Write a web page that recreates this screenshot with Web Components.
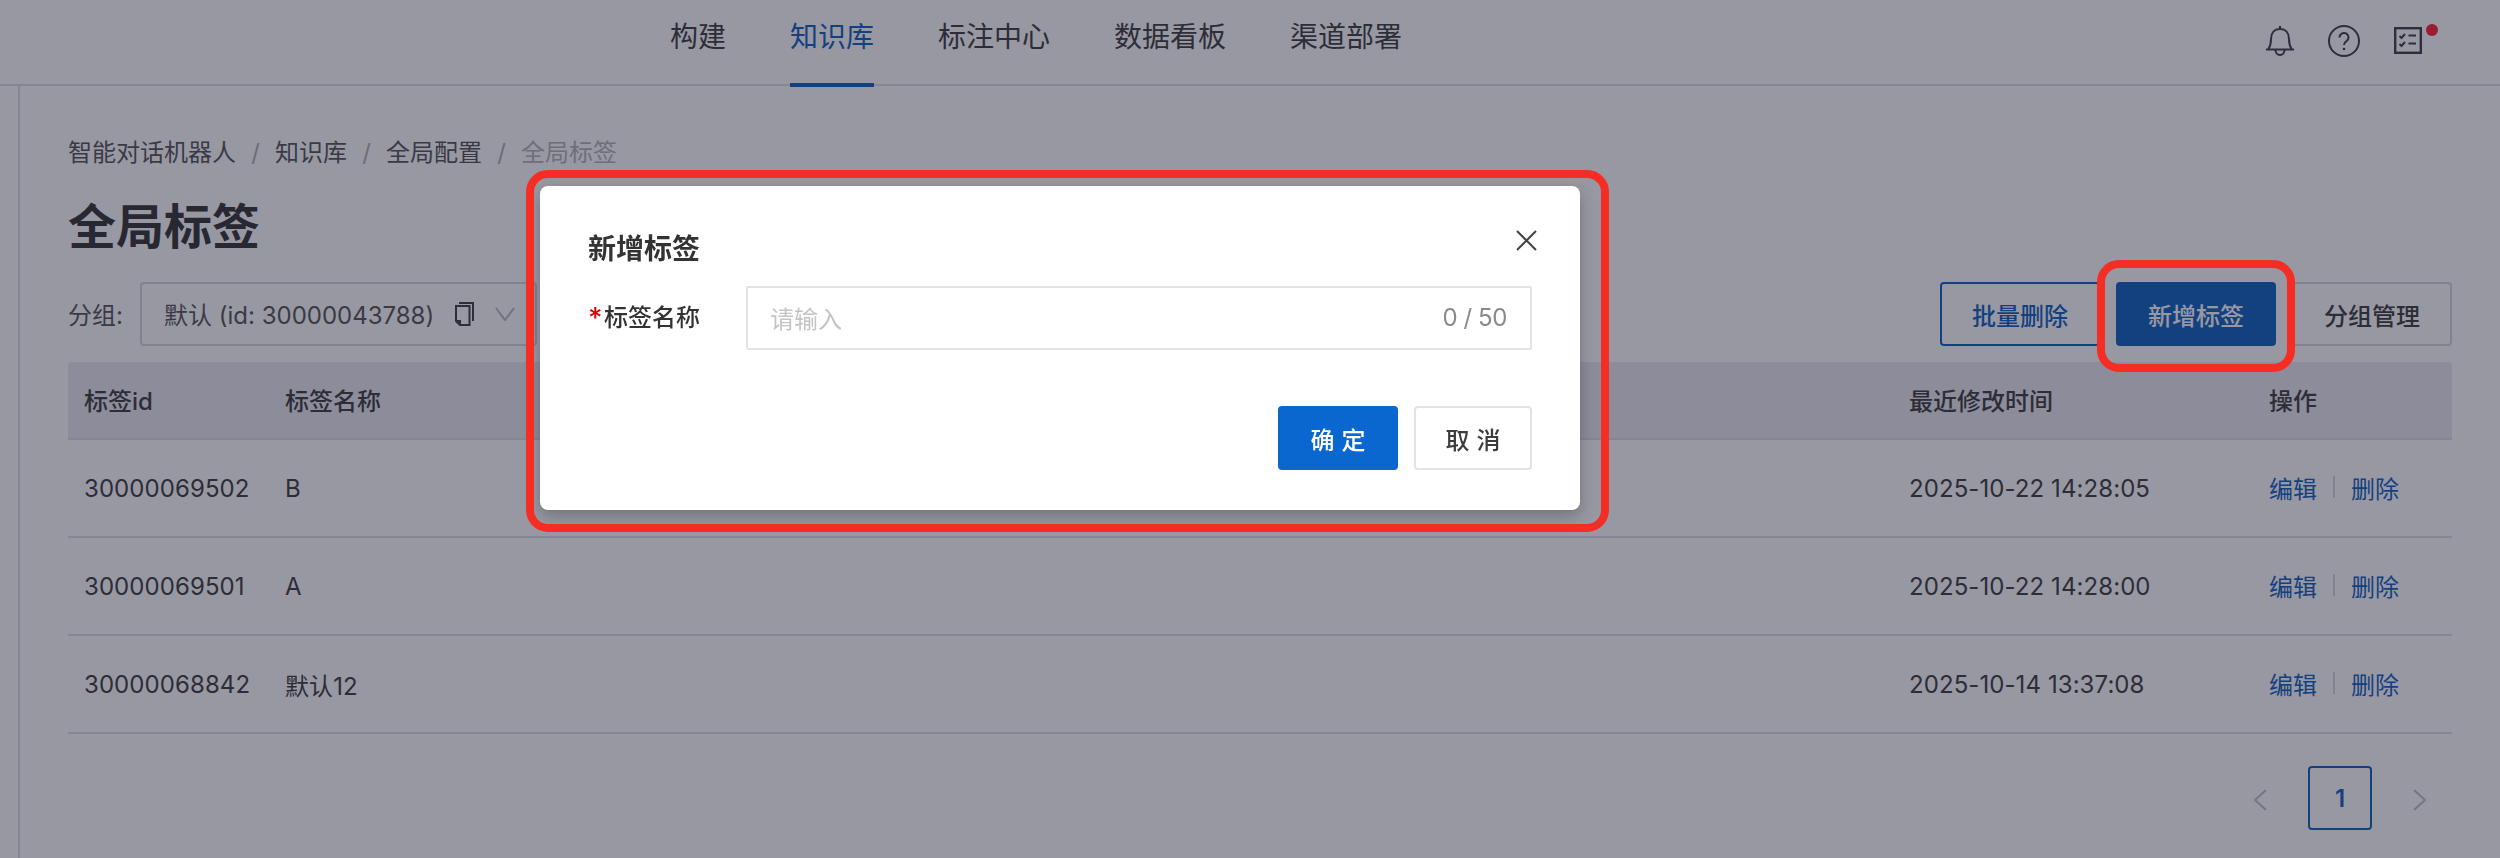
<!DOCTYPE html>
<html lang="zh">
<head>
<meta charset="utf-8">
<title>全局标签</title>
<style>
  html, body { margin: 0; height: 100%; overflow: hidden; background: #fff; }
  body { font-family: Inter, "Noto Sans CJK SC", sans-serif; font-size: 24px; color: #3c3c3c; }
</style>
</head>
<body>
<app-header>
  <nav-tab>构建</nav-tab>
  <nav-tab active>知识库</nav-tab>
  <nav-tab>标注中心</nav-tab>
  <nav-tab>数据看板</nav-tab>
  <nav-tab>渠道部署</nav-tab>
</app-header>

<page-body>
  <crumb-bar>
    <crumb-item>智能对话机器人</crumb-item>
    <crumb-item>知识库</crumb-item>
    <crumb-item>全局配置</crumb-item>
    <crumb-item current>全局标签</crumb-item>
  </crumb-bar>
  <page-title>全局标签</page-title>
  <filter-bar>
    <group-select slot="left" value="默认 (id: 30000043788)"></group-select>
    <app-btn outline>批量删除</app-btn>
    <app-btn primary>新增标签</app-btn>
    <app-btn>分组管理</app-btn>
  </filter-bar>
  <tag-table>
    <tag-row tid="30000069502" name="B" time="2025-10-22 14:28:05"></tag-row>
    <tag-row tid="30000069501" name="A" time="2025-10-22 14:28:00"></tag-row>
    <tag-row tid="30000068842" name="默认12" time="2025-10-14 13:37:08"></tag-row>
  </tag-table>
  <page-nav current="1"></page-nav>
</page-body>

<modal-mask>
  <tag-dialog>
    <span slot="title">新增标签</span>
    <form-field label="标签名称" placeholder="请输入" count="0 / 50"></form-field>
    <app-btn slot="footer" solid spaced>确定</app-btn>
    <app-btn slot="footer" plain spaced>取消</app-btn>
  </tag-dialog>
</modal-mask>

<mark-frame x="526" y="170" w="1083" h="362"></mark-frame>
<mark-frame x="2097" y="260" w="198" h="112"></mark-frame>

<script>
// colours below are the undimmed ones, the mask darkens everything under the dialog
const BLUE = "#0e62c0";

class AppHeader extends HTMLElement {
  constructor() {
    super();
    this.attachShadow({ mode: "open" });
  }

  connectedCallback() {
    this.shadowRoot.innerHTML = `
      <style>
        :host {
          display: flex;
          height: 86px;
          box-sizing: border-box;
          border-bottom: 2px solid #dcdce2;
          position: relative;
        }
        .tabs { display: flex; gap: 64px; margin-left: 670px; }
        .icons { display: flex; margin-left: auto; margin-right: 62px; padding-top: 25px; color: #3c3c48; }
        svg { display: block; fill: none; stroke: currentColor; stroke-width: 2; }
        .bell { margin-right: 33px; }
        .help { margin-right: 34px; }
        .list { margin-top: 2px; }
        .dot {
          width: 12px;
          height: 12px;
          border-radius: 50%;
          background: #ff1f33;
          margin: -1px 0 0 4px;
        }
      </style>
      <div class="tabs"><slot></slot></div>
      <div class="icons">
        <svg class="bell" width="30" height="32" viewBox="0 0 30 32">
          <path d="M15 1v3M1 24.5h28M3.500 24C5.500 21 6 18 6 14 6 8 9.500 4 15 4s9 4 9 10c0 4 .5 7 2.500 10M10.500 25c0 3 2 5 4.500 5s4.500-2 4.500-5"/>
        </svg>
        <svg class="help" width="32" height="32" viewBox="0 0 32 32">
          <circle cx="16" cy="16" r="15"/>
          <path d="M11.500 12.500a4.500 4.500 0 1 1 7 3.700c-1.600 1-2.500 2-2.500 3.800"/>
          <circle cx="16" cy="24" r="1.300" fill="currentColor" stroke="none"/>
        </svg>
        <svg class="list" width="28" height="27" viewBox="0 0 28 27">
          <rect x="1.200" y="1.200" width="25.600" height="24.600" stroke-width="2.400"/>
          <path d="M5.500 9l2 2 3.500-4M5.500 17l2 2 3.500-4M14.500 8.500h7.500M14.500 16.500h7.500"/>
        </svg>
        <div class="dot"></div>
      </div>
    `;
  }
}
customElements.define("app-header", AppHeader);

class NavTab extends HTMLElement {
  constructor() {
    super();
    this.attachShadow({ mode: "open" });
    this.shadowRoot.innerHTML = `
      <style>
        :host {
          display: block;
          height: 87px;
          box-sizing: border-box;
          padding-top: 17px;
          font-size: 28px;
          line-height: 40px;
          color: #3c3c3c;
        }
        :host([active]) {
          color: ${BLUE};
          border-bottom: 4px solid ${BLUE};
        }
      </style>
      <slot></slot>
    `;
  }
}
customElements.define("nav-tab", NavTab);

class PageBody extends HTMLElement {
  constructor() {
    super();
    this.attachShadow({ mode: "open" });
    this.shadowRoot.innerHTML = `
      <style>
        :host { display: flex; height: 772px; }
        .rail { width: 18px; border-right: 2px solid #dcdce2; flex-shrink: 0; }
        .main { flex: 1; min-width: 0; padding: 51px 48px 0; }
      </style>
      <div class="rail"></div>
      <div class="main"><slot></slot></div>
    `;
  }
}
customElements.define("page-body", PageBody);

class CrumbBar extends HTMLElement {
  constructor() {
    super();
    this.attachShadow({ mode: "open" });
    this.shadowRoot.innerHTML = `
      <style>
        :host { display: flex; height: 32px; line-height: 32px; font-size: 24px; }
      </style>
      <slot></slot>
    `;
  }
}
customElements.define("crumb-bar", CrumbBar);

class CrumbItem extends HTMLElement {
  constructor() {
    super();
    this.attachShadow({ mode: "open" });
    this.shadowRoot.innerHTML = `
      <style>
        :host { display: flex; color: #555; }
        :host([current]) { color: #b4b4b4; }
        :host([current]) .sep { display: none; }
        .sep { width: 39px; text-align: center; color: #b0b0b0; }
      </style>
      <slot></slot><span class="sep">/</span>
    `;
  }
}
customElements.define("crumb-item", CrumbItem);

class PageTitle extends HTMLElement {
  constructor() {
    super();
    this.attachShadow({ mode: "open" });
    this.shadowRoot.innerHTML = `
      <style>
        :host {
          display: block;
          margin-top: 26px;
          font-size: 48px;
          line-height: 64px;
          font-weight: 700;
          color: #333;
        }
      </style>
      <slot></slot>
    `;
  }
}
customElements.define("page-title", PageTitle);

class FilterBar extends HTMLElement {
  constructor() {
    super();
    this.attachShadow({ mode: "open" });
    this.shadowRoot.innerHTML = `
      <style>
        :host { display: flex; align-items: center; margin-top: 23px; height: 64px; }
        .label { width: 72px; color: #555; padding-bottom: 2px; }
        .actions { display: flex; gap: 16px; margin-left: auto; }
      </style>
      <span class="label">分组:</span>
      <slot name="left"></slot>
      <div class="actions"><slot></slot></div>
    `;
  }
}
customElements.define("filter-bar", FilterBar);

class GroupSelect extends HTMLElement {
  constructor() {
    super();
    this.attachShadow({ mode: "open" });
  }

  connectedCallback() {
    this.shadowRoot.innerHTML = `
      <style>
        :host {
          display: flex;
          align-items: center;
          width: 397px;
          height: 64px;
          box-sizing: border-box;
          border: 2px solid #d6d6dc;
          border-radius: 4px;
          padding-left: 22px;
          color: #555;
          white-space: nowrap;
        }
        span { padding-bottom: 2px; }
        svg { flex-shrink: 0; fill: none; stroke-width: 2; }
        .copy { stroke: #3c3c48; margin-left: 21px; }
        .arrow { stroke: #b8b8c0; margin-left: 21px; }
      </style>
      <span>${this.getAttribute("value") || ""}</span>
      <svg class="copy" width="19" height="24" viewBox="0 0 19 24">
        <path d="M1 4h13.500v19H5l-4-4zM1 19h4v4M4 1h14v18"/>
      </svg>
      <svg class="arrow" width="20" height="14" viewBox="0 0 20 14">
        <path d="M1 1l9 12 9-12"/>
      </svg>
    `;
  }
}
customElements.define("group-select", GroupSelect);

class AppBtn extends HTMLElement {
  constructor() {
    super();
    this.attachShadow({ mode: "open" });
    this.shadowRoot.innerHTML = `
      <style>
        :host {
          display: flex;
          align-items: center;
          justify-content: center;
          width: 160px;
          height: 64px;
          box-sizing: border-box;
          border: 2px solid #d6d6dc;
          border-radius: 4px;
          background: #fff;
          color: #3c3c3c;
          font-size: 24px;
          font-weight: 500;
          white-space: nowrap;
        }
        :host([outline]) { border-color: ${BLUE}; color: ${BLUE}; }
        :host([primary]) { background: ${BLUE}; border-color: ${BLUE}; color: #fff; }
        :host([solid]) { width: 120px; background: #0967cf; border-color: #0967cf; color: #fff; }
        :host([plain]) { width: 118px; border-color: #e3e3e3; }
        :host([spaced]) { letter-spacing: 7px; text-indent: 7px; }
      </style>
      <slot></slot>
    `;
  }
}
customElements.define("app-btn", AppBtn);

class TagTable extends HTMLElement {
  constructor() {
    super();
    this.attachShadow({ mode: "open" });
    this.shadowRoot.innerHTML = `
      <style>
        :host { display: block; margin-top: 16px; }
        .head {
          display: grid;
          grid-template-columns: 201px 1fr 360px 199px;
          align-items: center;
          height: 78px;
          box-sizing: border-box;
          background: #e9e9ee;
          border-bottom: 2px solid #dcdce2;
          border-radius: 4px 4px 0 0;
          font-weight: 500;
          color: #3c3c3c;
        }
        .head span { padding: 0 0 2px 16px; }
      </style>
      <div class="head">
        <span>标签id</span><span>标签名称</span><span>最近修改时间</span><span>操作</span>
      </div>
      <slot></slot>
    `;
  }
}
customElements.define("tag-table", TagTable);

class TagRow extends HTMLElement {
  constructor() {
    super();
    this.attachShadow({ mode: "open" });
  }

  connectedCallback() {
    const tid = this.getAttribute("tid") || "";
    const name = this.getAttribute("name") || "";
    const time = this.getAttribute("time") || "";

    this.shadowRoot.innerHTML = `
      <style>
        :host {
          display: grid;
          grid-template-columns: 201px 1fr 360px 199px;
          align-items: center;
          height: 98px;
          box-sizing: border-box;
          border-bottom: 2px solid #dcdce2;
          color: #3c3c3c;
        }
        .cell { padding-left: 16px; letter-spacing: 0.08px; }
        .ops { display: flex; align-items: center; color: ${BLUE}; letter-spacing: 0; padding-bottom: 2px; }
        .ops i { width: 2px; height: 22px; margin: 0 16px; background: #d6d6dc; }
      </style>
      <div class="cell">${tid}</div>
      <div class="cell">${name}</div>
      <div class="cell">${time}</div>
      <div class="cell ops"><span>编辑</span><i></i><span>删除</span></div>
    `;
  }
}
customElements.define("tag-row", TagRow);

class PageNav extends HTMLElement {
  constructor() {
    super();
    this.attachShadow({ mode: "open" });
  }

  connectedCallback() {
    this.shadowRoot.innerHTML = `
      <style>
        :host { display: flex; justify-content: flex-end; gap: 16px; margin-top: 32px; }
        .cell {
          display: flex;
          align-items: center;
          justify-content: center;
          width: 64px;
          height: 64px;
          box-sizing: border-box;
        }
        .on {
          border: 2px solid ${BLUE};
          border-radius: 4px;
          color: ${BLUE};
          font-weight: 600;
        }
        svg { fill: none; stroke: #c0c0c6; stroke-width: 2; margin-top: 4px; }
      </style>
      <div class="cell">
        <svg width="14" height="22" viewBox="0 0 14 22"><path d="M13 1L2 11l11 10"/></svg>
      </div>
      <div class="cell on">${this.getAttribute("current") || "1"}</div>
      <div class="cell">
        <svg width="14" height="22" viewBox="0 0 14 22"><path d="M1 1l11 10L1 21"/></svg>
      </div>
    `;
  }
}
customElements.define("page-nav", PageNav);

class ModalMask extends HTMLElement {
  constructor() {
    super();
    this.attachShadow({ mode: "open" });
    this.shadowRoot.innerHTML = `
      <style>
        :host {
          position: fixed;
          inset: 0;
          display: block;
          background: rgba(27, 27, 51, 0.45);
        }
      </style>
      <slot></slot>
    `;
  }
}
customElements.define("modal-mask", ModalMask);

class TagDialog extends HTMLElement {
  constructor() {
    super();
    this.attachShadow({ mode: "open" });
    this.shadowRoot.innerHTML = `
      <style>
        :host {
          position: absolute;
          left: 540px;
          top: 186px;
          width: 1040px;
          height: 324px;
          box-sizing: border-box;
          padding: 42px 48px 40px;
          display: block;
          background: #fff;
          border-radius: 8px;
          box-shadow: 0 6px 16px rgba(0, 0, 0, 0.25);
        }
        .top { display: flex; justify-content: space-between; height: 40px; }
        .title { font-size: 28px; line-height: 40px; font-weight: 700; color: #333; padding-top: 1px; }
        .close { margin: 2px -5px 0 0; fill: none; stroke: #444; stroke-width: 2; }
        .body { margin-top: 18px; }
        .foot { display: flex; justify-content: flex-end; gap: 16px; margin-top: 56px; }
      </style>
      <div class="top">
        <div class="title"><slot name="title"></slot></div>
        <svg class="close" width="21" height="21" viewBox="0 0 21 21"><path d="M1 1l19 19M20 1L1 20"/></svg>
      </div>
      <div class="body"><slot></slot></div>
      <div class="foot"><slot name="footer"></slot></div>
    `;
  }
}
customElements.define("tag-dialog", TagDialog);

class FormField extends HTMLElement {
  constructor() {
    super();
    this.attachShadow({ mode: "open" });
  }

  connectedCallback() {
    this.shadowRoot.innerHTML = `
      <style>
        :host { display: flex; align-items: center; font-size: 24px; }
        .label { display: flex; align-items: flex-start; width: 158px; color: #333; font-weight: 500; }
        .star { width: 16px; color: #e00000; font-size: 28px; line-height: 34px; }
        .name { line-height: 34px; }
        .box {
          flex: 1;
          display: flex;
          align-items: center;
          justify-content: space-between;
          height: 64px;
          box-sizing: border-box;
          padding: 0 23px 2px 22px;
          border: 2px solid #e3e3e3;
          border-radius: 2px;
        }
        .ph { color: #c4c4c4; }
        .count { color: #8a8a8a; letter-spacing: -0.4px; }
      </style>
      <div class="label"><span class="star">*</span><span class="name">${this.getAttribute("label") || ""}</span></div>
      <div class="box">
        <span class="ph">${this.getAttribute("placeholder") || ""}</span>
        <span class="count">${this.getAttribute("count") || ""}</span>
      </div>
    `;
  }
}
customElements.define("form-field", FormField);

// the red annotation boxes sit on top of the screenshot, so they go by coordinates
class MarkFrame extends HTMLElement {
  constructor() {
    super();
    this.attachShadow({ mode: "open" });
    this.shadowRoot.innerHTML = `
      <style>
        :host {
          position: fixed;
          display: block;
          box-sizing: border-box;
          border: 8px solid #f52d25;
          border-radius: 22px;
        }
      </style>
    `;
  }

  connectedCallback() {
    this.style.left = `${this.getAttribute("x")}px`;
    this.style.top = `${this.getAttribute("y")}px`;
    this.style.width = `${this.getAttribute("w")}px`;
    this.style.height = `${this.getAttribute("h")}px`;
  }
}
customElements.define("mark-frame", MarkFrame);
</script>
</body>
</html>
